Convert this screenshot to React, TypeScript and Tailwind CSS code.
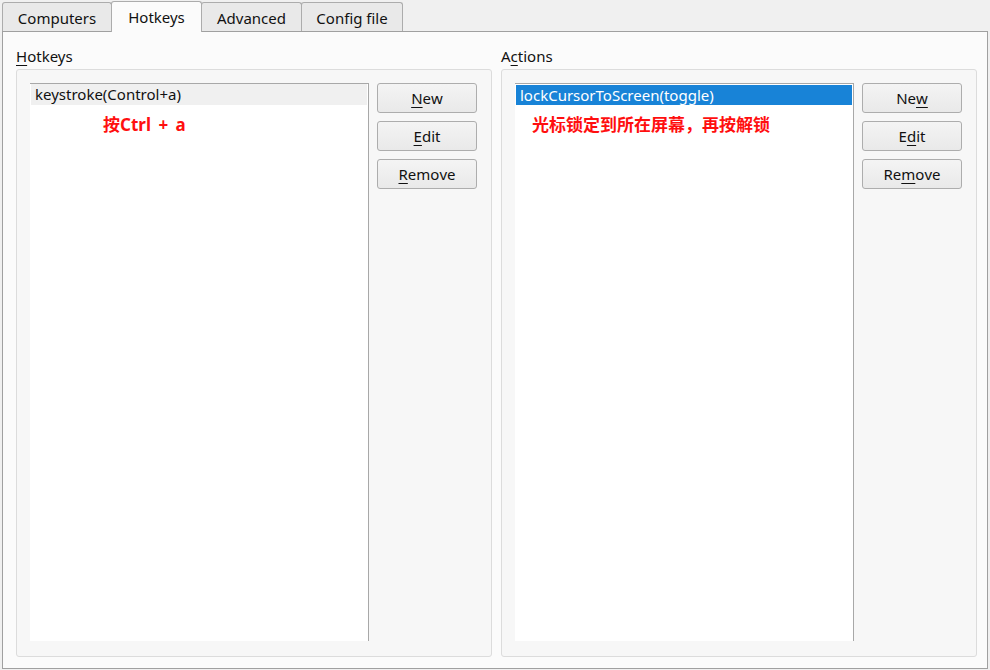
import React from 'react';

const ui = { fontFamily: '"Noto Sans", "Open Sans", sans-serif' };
const cjk = { fontFamily: '"Noto Sans", "Noto Sans CJK SC", sans-serif' };

const Label: React.FC<{ text: string; ul: number }> = ({ text, ul }) => (
  <>
    {text.split('').map((ch, i) =>
      i === ul ? (
        <u key={i} className="underline decoration-1 underline-offset-[3px]">
          {ch}
        </u>
      ) : (
        <span key={i}>{ch}</span>
      ),
    )}
  </>
);

const Button: React.FC<{ label: string; ul: number }> = ({ label, ul }) => (
  <button
    className="flex h-[30px] w-[100px] items-center justify-center rounded-[3px] border border-[#adadad] bg-gradient-to-b from-[#f4f4f4] to-[#e9e9e9] text-[15px] text-[#111]"
    style={ui}
  >
    <Label text={label} ul={ul} />
  </button>
);

const Tab: React.FC<{ label: string; width: string; active?: boolean }> = ({ label, width, active }) =>
  active ? (
    <div
      className={`${width} relative z-10 -mb-px flex h-[31px] items-start justify-center rounded-t-[3px] border border-b-0 border-[#acacac] bg-[#fbfbfb] pt-[4px] text-[15px] text-[#111]`}
      style={ui}
    >
      {label}
    </div>
  ) : (
    <div
      className={`${width} flex h-[29px] items-center justify-center rounded-t-[3px] border border-b-0 border-[#acacac] bg-[#e9e9e9] pt-[2px] text-[15px] text-[#111]`}
      style={ui}
    >
      {label}
    </div>
  );

type PanelProps = {
  title: string;
  titleKey: number;
  item: string;
  selected?: boolean;
  note: string;
  noteIndent: string;
  keys: [number, number, number];
};

const Panel: React.FC<PanelProps> = ({ title, titleKey, item, selected, note, noteIndent, keys }) => (
  <div className="flex w-[476px] flex-col">
    <div className="h-[37px] pt-[14px] pl-[-1px] text-[15px] leading-[20px] text-[#111]" style={ui}>
      <Label text={title} ul={titleKey} />
    </div>
    <div className="flex h-[588px] gap-[8px] rounded-[3px] border border-[#dcdcdc] bg-[#f7f7f7] pt-[13px] pr-[14px] pb-[14px] pl-[13px]">
      <div className="flex h-[558px] w-[339px] flex-col border-t border-r border-[#a8a8a8] bg-white">
        <div
          className={`mx-px flex items-center pl-[4px] text-[15px] ${
            selected ? 'mt-[1px] h-[20px] bg-[#1883d7] text-white' : 'h-[21px] bg-[#f0f0f0] text-[#111]'
          }`}
          style={ui}
        >
          {item}
        </div>
        <div
          className={`${noteIndent} mt-[9px] text-[17px] font-bold leading-[22px] text-[#ff0f0f] [word-spacing:3px]`}
          style={cjk}
        >
          {note}
        </div>
      </div>
      <div className="flex flex-col gap-[8px]">
        <Button label="New" ul={keys[0]} />
        <Button label="Edit" ul={keys[1]} />
        <Button label="Remove" ul={keys[2]} />
      </div>
    </div>
  </div>
);

export default function App() {
  return (
    <div className="flex h-[670px] w-[990px] flex-col bg-[#f0f0f0]">
      <div className="flex h-[31px] items-end pl-[2px]">
        <Tab label="Computers" width="w-[110px]" />
        <Tab label="Hotkeys" width="-ml-px w-[91px]" active />
        <Tab label="Advanced" width="-ml-px w-[101px]" />
        <Tab label="Config file" width="-ml-px w-[102px]" />
      </div>
      <div className="mx-[2px] flex h-[638px] gap-[9px] border border-[#a0a0a0] bg-[#fbfbfb] pl-[13px]">
        <Panel
          title="Hotkeys"
          titleKey={0}
          item="keystroke(Control+a)"
          note="按Ctrl + a"
          noteIndent="pl-[73px]"
          keys={[0, 0, 0]}
        />
        <Panel
          title="Actions"
          titleKey={1}
          item="lockCursorToScreen(toggle)"
          selected
          note="光标锁定到所在屏幕，再按解锁"
          noteIndent="pl-[17px]"
          keys={[2, 1, 2]}
        />
      </div>
    </div>
  );
}
